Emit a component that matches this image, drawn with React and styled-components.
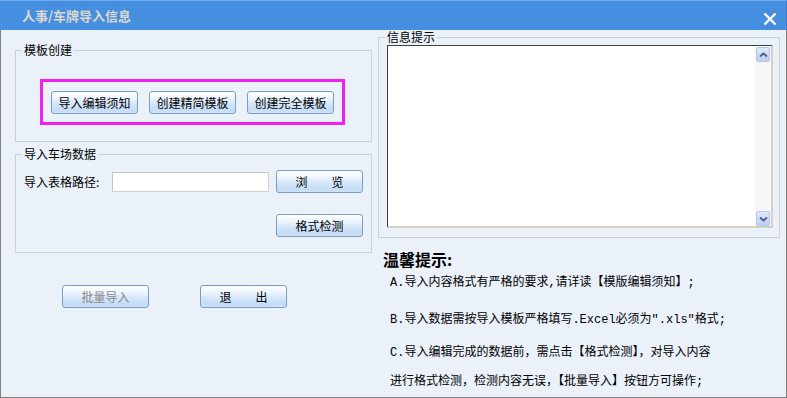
import React from "react";
import styled, { createGlobalStyle } from "styled-components";

const GlobalStyle = createGlobalStyle`
  html, body { margin: 0; padding: 0; background: #ffffff; }
  body {
    font-family: "Noto Sans CJK SC", "Liberation Sans", sans-serif;
    font-size: 12px;
    color: #000;
  }
  * { box-sizing: border-box; }
`;

const Window = styled.div`
  width: 787px;
  height: 398px;
  display: flex;
  flex-direction: column;
  background: #eaf1f9;
`;

const TitleBar = styled.div`
  height: 30px;
  flex: none;
  display: flex;
  align-items: center;
  justify-content: space-between;
  padding: 0 9px 0 22px;
  background: #468ee0;
  border-top: 1px solid #6eaaf2;
  border-right: 1px solid #3c7fd0;
`;

const Title = styled.div`
  font-size: 13px;
  font-weight: bold;
  color: #dcd8d0;
  line-height: 16px;
`;

const CloseButton = styled.div`
  width: 14px;
  height: 14px;
  margin-top: 6px;
  display: flex;
`;

const Body = styled.div`
  flex: 1;
  display: flex;
  gap: 6px;
  padding: 0 6px 0 14px;
  border: 1px solid #7f7f7f;
  border-top: none;
`;

const LeftColumn = styled.div`
  width: 357px;
  padding-top: 13px;
  display: flex;
  flex-direction: column;
`;

const RightColumn = styled.div`
  width: 402px;
  display: flex;
  flex-direction: column;
`;

const Group = styled.fieldset`
  margin: ${(p) => p.$mt || 0}px 0 0 0;
  padding: 0;
  min-width: 0;
  border: 1px solid #d0d0d0;
`;

const Legend = styled.legend`
  margin-left: 6px;
  padding: 0 2px;
  font-size: 12px;
  line-height: 14px;
  color: #000;
`;

const Highlight = styled.div`
  margin: 22px 0 16px 24px;
  width: 305px;
  height: 46px;
  border: 3px solid #f020f0;
  display: flex;
  align-items: center;
  justify-content: center;
  gap: 11px;
`;

const Button = styled.button`
  width: 87px;
  height: 23px;
  flex: none;
  padding: 0;
  border: 1px solid #7c9bc6;
  border-radius: 3px;
  background: linear-gradient(
    to bottom,
    #ffffff 0%,
    #eef5fd 30%,
    #d6e7fa 55%,
    #c4dcf5 85%,
    #cfe3f8 100%
  );
  font-family: "Noto Sans CJK SC", "Liberation Sans", sans-serif;
  font-size: 12px;
  line-height: 21px;
  color: ${(p) => (p.$muted ? "#8a8a8a" : "#000")};
  white-space: pre;
  cursor: default;
`;

const Row = styled.div`
  display: flex;
  align-items: center;
  justify-content: ${(p) => (p.$end ? "flex-end" : "flex-start")};
  padding: ${(p) => p.$pad};
`;

const FieldLabel = styled.span`
  width: 88px;
  flex: none;
  line-height: 14px;
`;

const PathInput = styled.div`
  width: 157px;
  height: 20px;
  margin-right: 7px;
  background: #ffffff;
  border: 1px solid #d2d2d2;
  border-top-color: #c4c4c4;
  border-left-color: #c4c4c4;
`;

const ActionRow = styled.div`
  margin-top: 32px;
  padding-left: 47px;
  display: flex;
  gap: 51px;
`;

const InfoBody = styled.div`
  padding: 1px 6px 9px 8px;
`;

const MessageBox = styled.div`
  height: 183px;
  display: flex;
  background: #ffffff;
  border-top: 1px solid #404040;
  border-left: 1px solid #404040;
  border-right: 2px solid #d4d0c8;
  border-bottom: 2px solid #d4d0c8;
`;

const MessageArea = styled.div`
  flex: 1;
`;

const ScrollTrack = styled.div`
  width: 16px;
  display: flex;
  flex-direction: column;
  justify-content: space-between;
  padding: 1px 1px 0 1px;
  background: #f7f7f7;
`;

const ScrollArrow = styled.div`
  height: 15px;
  display: flex;
  align-items: center;
  justify-content: center;
  border: 1px solid #b4c6ea;
  border-radius: 2px;
  background: linear-gradient(to bottom, #dfe8fb, #bccff3);
`;

const Heading = styled.div`
  margin: 11px 0 0 5px;
  font-size: 16px;
  font-weight: bold;
  line-height: 20px;
`;

const TipLine = styled.p`
  margin: ${(p) => p.$mt}px 0 0 12px;
  font-family: "Liberation Mono", "Noto Sans CJK SC", monospace;
  font-size: 12px;
  line-height: 16px;
  white-space: nowrap;
`;

const Chevron = ({ down }) => (
  <svg width="9" height="6" viewBox="0 0 9 6">
    <path
      d={down ? "M1 1.5 L4.5 4.5 L8 1.5" : "M1 4.5 L4.5 1.5 L8 4.5"}
      stroke="#4b5f86"
      strokeWidth="1.8"
      fill="none"
    />
  </svg>
);

export default function App() {
  return (
    <>
      <GlobalStyle />
      <Window>
        <TitleBar>
          <Title>人事/车牌导入信息</Title>
          <CloseButton>
            <svg width="14" height="14" viewBox="0 0 14 14">
              <path
                d="M1.5 1.5 L12.5 12.5 M12.5 1.5 L1.5 12.5"
                stroke="#ffffff"
                strokeWidth="2.4"
              />
            </svg>
          </CloseButton>
        </TitleBar>
        <Body>
          <LeftColumn>
            <Group>
              <Legend>模板创建</Legend>
              <Highlight>
                <Button>导入编辑须知</Button>
                <Button>创建精简模板</Button>
                <Button>创建完全模板</Button>
              </Highlight>
            </Group>
            <Group $mt={5}>
              <Legend>导入车场数据</Legend>
              <Row $pad="9px 8px 0 8px">
                <FieldLabel>导入表格路径:</FieldLabel>
                <PathInput />
                <Button>{"浏　　览"}</Button>
              </Row>
              <Row $end $pad="21px 8px 15px 8px">
                <Button>格式检测</Button>
              </Row>
            </Group>
            <ActionRow>
              <Button $muted>批量导入</Button>
              <Button>{"退　　出"}</Button>
            </ActionRow>
          </LeftColumn>
          <RightColumn>
            <Group>
              <Legend>信息提示</Legend>
              <InfoBody>
                <MessageBox>
                  <MessageArea />
                  <ScrollTrack>
                    <ScrollArrow>
                      <Chevron />
                    </ScrollArrow>
                    <ScrollArrow>
                      <Chevron down />
                    </ScrollArrow>
                  </ScrollTrack>
                </MessageBox>
              </InfoBody>
            </Group>
            <Heading>温馨提示:</Heading>
            <TipLine $mt={6}>A.导入内容格式有严格的要求,请详读【模版编辑须知】;</TipLine>
            <TipLine $mt={21}>B.导入数据需按导入模板严格填写.Excel必须为".xls"格式;</TipLine>
            <TipLine $mt={17}>C.导入编辑完成的数据前，需点击【格式检测】，对导入内容</TipLine>
            <TipLine $mt={13}>进行格式检测，检测内容无误，【批量导入】按钮方可操作;</TipLine>
          </RightColumn>
        </Body>
      </Window>
    </>
  );
}
